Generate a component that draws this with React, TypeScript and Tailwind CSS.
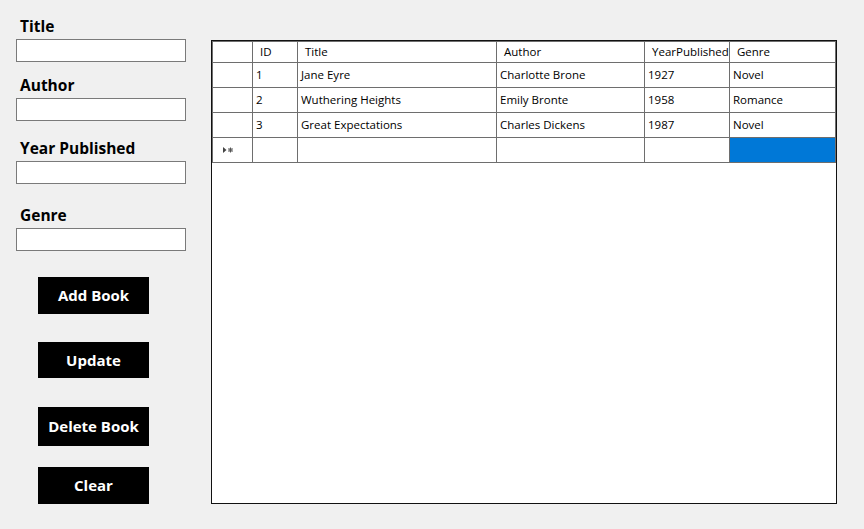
import React from 'react';

type Book = { id: number; title: string; author: string; year: number; genre: string };

const books: Book[] = [
  { id: 1, title: 'Jane Eyre', author: 'Charlotte Brone', year: 1927, genre: 'Novel' },
  { id: 2, title: 'Wuthering Heights', author: 'Emily Bronte', year: 1958, genre: 'Romance' },
  { id: 3, title: 'Great Expectations', author: 'Charles Dickens', year: 1987, genre: 'Novel' },
];

const cols = 'grid grid-cols-[40px_45px_199px_148px_85px_106px]';
const cell = 'border-r border-b border-[#6e6e6e] flex items-center pl-[3px] whitespace-nowrap overflow-hidden';
const head = 'border-r border-b border-[#6e6e6e] flex items-center whitespace-nowrap overflow-hidden';

function Field({ label, mt }: { label: string; mt: string }) {
  return (
    <>
      <label className={`${mt} ml-1 block text-[15.5px] leading-[20px] font-bold text-black`}>{label}</label>
      <input type="text" className="mt-[3px] block w-[170px] h-[23px] bg-white border border-[#7a7a7a] outline-none" />
    </>
  );
}

function NewRowGlyph() {
  return (
    <svg width="12" height="8" viewBox="0 0 12 8" className="ml-[6px]">
      <path d="M1 1 L4.5 4 L1 7 Z" fill="#444" />
      <g stroke="#555" strokeWidth="1">
        <line x1="8.5" y1="1.5" x2="8.5" y2="6.5" />
        <line x1="6" y1="4" x2="11" y2="4" />
        <line x1="6.5" y1="2" x2="10.5" y2="6" />
        <line x1="10.5" y1="2" x2="6.5" y2="6" />
      </g>
    </svg>
  );
}

export default function App() {
  return (
    <div className="w-[864px] h-[529px] bg-[#f0f0f0] flex font-['Open_Sans',sans-serif] text-black">
      {/* form */}
      <div className="w-[211px] shrink-0 flex flex-col pl-4">
        <Field label="Title" mt="mt-[16px]" />
        <Field label="Author" mt="mt-[13px]" />
        <Field label="Year Published" mt="mt-[17px]" />
        <Field label="Genre" mt="mt-[21px]" />

        <button className="mt-[26px] ml-[22px] w-[111px] h-[37px] bg-black text-white text-[15px] font-bold">Add Book</button>
        <button className="mt-[28px] ml-[22px] w-[111px] h-[36px] bg-black text-white text-[15px] font-bold">Update</button>
        <button className="mt-[29px] ml-[22px] w-[111px] h-[39px] bg-black text-white text-[15px] font-bold">Delete Book</button>
        <button className="mt-[21px] ml-[22px] w-[111px] h-[37px] bg-black text-white text-[15px] font-bold">Clear</button>
      </div>

      {/* grid */}
      <div className="pt-[40px]">
        <div className="w-[626px] h-[464px] bg-white border border-[#111]">
          <div className="border-l border-t border-[#6e6e6e] text-[11.5px] leading-[16px]">
            <div className={`${cols} h-[21px]`}>
              <div className={head}></div>
              <div className={`${head} pl-[7px]`}>ID</div>
              <div className={`${head} pl-[7px]`}>Title</div>
              <div className={`${head} pl-[7px]`}>Author</div>
              <div className={`${head} pl-[7px]`}>YearPublished</div>
              <div className={`${head} pl-[7px]`}>Genre</div>
            </div>
            {books.map((b) => (
              <div key={b.id} className={`${cols} h-[25px]`}>
                <div className={cell}></div>
                <div className={cell}>{b.id}</div>
                <div className={cell}>{b.title}</div>
                <div className={cell}>{b.author}</div>
                <div className={cell}>{b.year}</div>
                <div className={cell}>{b.genre}</div>
              </div>
            ))}
            <div className={`${cols} h-[25px]`}>
              <div className={`${cell} pl-0`}><NewRowGlyph /></div>
              <div className={cell}></div>
              <div className={cell}></div>
              <div className={cell}></div>
              <div className={cell}></div>
              <div className={`${cell} bg-[#0078d7]`}></div>
            </div>
          </div>
        </div>
      </div>
    </div>
  );
}
